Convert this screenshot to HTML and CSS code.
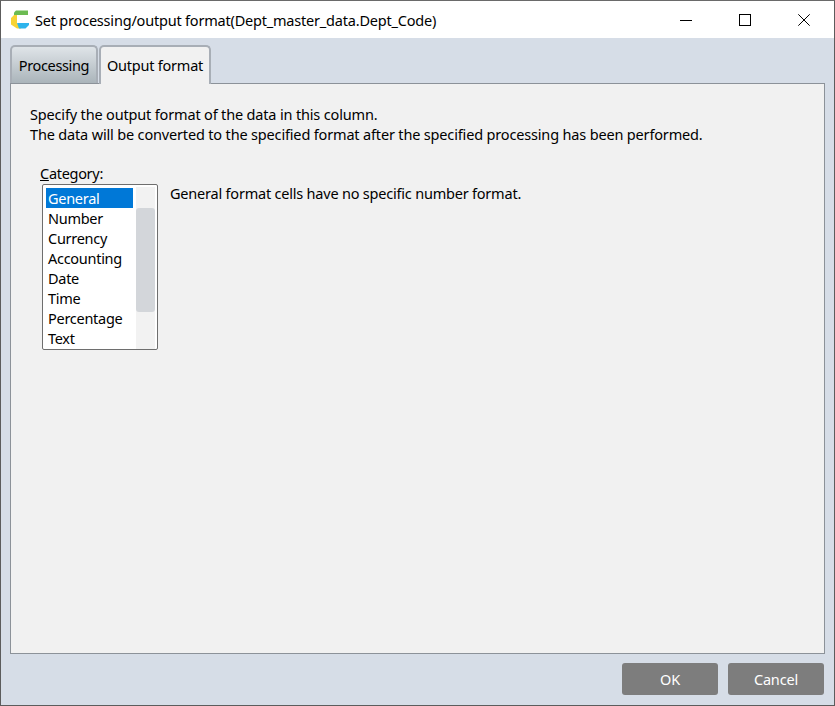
FILE: index.html
```html
<!DOCTYPE html>
<html lang="en">
<head>
<meta charset="utf-8">
<title>Set processing/output format</title>
<link rel="stylesheet" href="styles.css">
</head>
<body>
<div class="window">
  <header class="titlebar">
    <svg class="app-icon" width="18" height="19" viewBox="0 0 18 19">
      <path d="M5 0.5 H17 V5 H3 L3 2.5 Z" fill="#6cbb52"/>
      <path d="M0 8 L3 5 H6 V14 H10 V18.5 H6 L0 14.5 Z" fill="#f7d335"/>
      <path d="M6 13 H18 V15 L14.5 18.5 H8 Z" fill="#2eb4ec"/>
    </svg>
    <span class="title">Set processing/output format(Dept_master_data.Dept_Code)</span>
    <div class="controls">
      <span class="control"><svg width="12" height="12" viewBox="0 0 12 12"><path d="M0 6.5 H12" stroke="#000" fill="none"/></svg></span>
      <span class="control"><svg width="12" height="12" viewBox="0 0 12 12"><rect x=".5" y=".5" width="11" height="11" stroke="#000" fill="none"/></svg></span>
      <span class="control"><svg width="12" height="12" viewBox="0 0 12 12"><path d="M.3 .3 L11.7 11.7 M11.7 .3 L.3 11.7" stroke="#000" fill="none"/></svg></span>
    </div>
  </header>
  <main class="body">
    <nav class="tabs">
      <div class="tab tab-inactive">Processing</div>
      <div class="tab tab-active">Output format</div>
    </nav>
    <section class="panel">
      <p class="desc">Specify the output format of the data in this column.<br>The data will be converted to the specified format after the specified processing has been performed.</p>
      <div class="label"><u>C</u>ategory:</div>
      <div class="category-row">
        <div class="listbox">
          <ul class="items">
            <li class="item selected">General</li>
            <li class="item">Number</li>
            <li class="item">Currency</li>
            <li class="item">Accounting</li>
            <li class="item">Date</li>
            <li class="item">Time</li>
            <li class="item">Percentage</li>
            <li class="item">Text</li>
          </ul>
          <div class="scrollbar"><div class="thumb"></div></div>
        </div>
        <div class="format-note">General format cells have no specific number format.</div>
      </div>
    </section>
    <footer class="footer">
      <button class="btn">OK</button>
      <button class="btn">Cancel</button>
    </footer>
  </main>
</div>
</body>
</html>
```
FILE: styles.css
```css
* { box-sizing: border-box; }
html, body { margin: 0; padding: 0; }
body { width: 835px; height: 706px; overflow: hidden; font-family: "Noto Sans", sans-serif; font-size: 14.5px; color: #000; }
.window { width: 835px; height: 706px; display: flex; flex-direction: column; border: 1px solid #5c5c5c; border-top-color: #6a6a6a; }
.titlebar { height: 37px; background: #fff; display: flex; align-items: center; padding-left: 10px; flex: none; }
.app-icon { flex: none; margin-right: 6px; }
.title { letter-spacing: -0.2px; white-space: nowrap; flex: 1; }
.controls { display: flex; height: 100%; padding-right: 1px; }
.control { width: 59px; display: flex; align-items: center; justify-content: center; }
.body { flex: 1; background: #d6dde7; display: flex; flex-direction: column; padding: 7px 9px 0 9px; min-height: 0; }
.tabs { display: flex; height: 39px; flex: none; gap: 1px; }
.tab { border: 2px solid #a8aeb6; border-bottom: 0; border-radius: 5px 5px 0 0; display: flex; align-items: center; justify-content: center; letter-spacing: -0.22px; padding-bottom: 1px; }
.tab-inactive { width: 88px; background: linear-gradient(#dfe4e8, #a9b3b9); letter-spacing: -0.35px; }
.tab-active { width: 112px; background: #f1f1f1; position: relative; z-index: 1; }
.panel { height: 571px; margin-top: -1px; background: #f1f1f1; border: 1px solid #8c9299; padding: 20px 0 0 19px; flex: none; }
.desc { margin: 0; line-height: 20px; letter-spacing: -0.165px; white-space: nowrap; }
.label { margin: 19px 0 0 10px; line-height: 20px; letter-spacing: -0.3px; }
.category-row { display: flex; margin: 1px 0 0 12px; }
.listbox { width: 116px; height: 166px; background: #fff; border: 1px solid #6e6e6e; border-radius: 2px; display: flex; padding: 3px 0 0 3px; overflow: hidden; flex: none; }
.items { list-style: none; margin: 0; padding: 0; width: 87px; flex: none; }
.item { height: 20px; line-height: 20px; padding-left: 2px; letter-spacing: -0.28px; white-space: nowrap; }
.selected { background: #0078d7; color: #fff; }
.scrollbar { width: 19px; margin: -1px 0 0 3px; padding: 21px 0 0 0; background: #f2f2f2; flex: none; height: 162px; }
.thumb { width: 19px; height: 104px; background: #d3d6da; border-radius: 3px; }
.format-note { margin: -1px 0 0 12px; letter-spacing: -0.21px; line-height: 20px; white-space: nowrap; }
.footer { flex: 1; display: flex; justify-content: flex-end; gap: 10px; padding: 9px 1px 0 0; }
.btn { width: 96px; height: 32px; background: #7d7d7d; color: #fff; border: 0; border-radius: 3px; font: inherit; letter-spacing: -0.15px; padding: 0; }
```
